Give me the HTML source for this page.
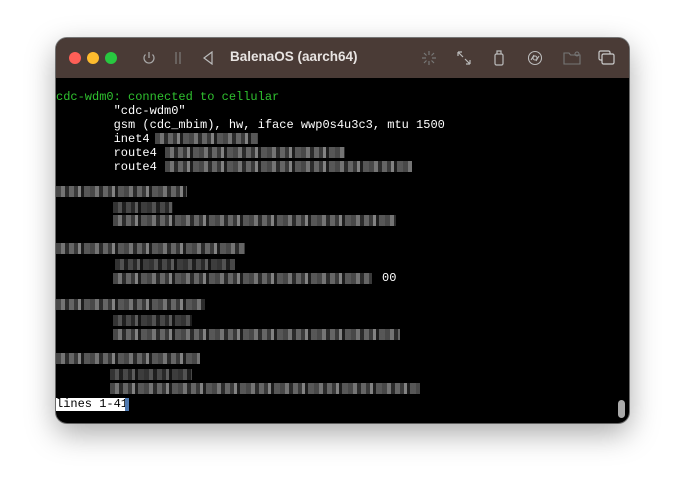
<!DOCTYPE html><html><head><style>
*{margin:0;padding:0;box-sizing:border-box}
body{width:685px;height:497px;background:#fff;position:relative;overflow:hidden;font-family:"Liberation Sans",sans-serif}
.win{position:absolute;left:56px;top:38px;width:573px;height:385px;border-radius:11px;background:#000;overflow:hidden;box-shadow:0 10px 30px rgba(0,0,0,.35),0 0 0 1px rgba(0,0,0,.5)}
.tb{position:absolute;left:0;top:0;width:100%;height:40px;background:#4a3b36}
.dot{position:absolute;top:14px;width:12px;height:12px;border-radius:50%}
.t{position:absolute;font-family:"Liberation Mono",monospace;font-size:12px;line-height:14px;color:#fff;white-space:pre}
.g{color:#2fc12f}
.b{position:absolute;height:11px;background:repeating-linear-gradient(90deg,#555 0 5px,#888 5px 9px,#333 9px 13px,#777 13px 18px,#444 18px 22px,#999 22px 25px,#222 25px 28px,#666 28px 34px);opacity:.85}
.title{position:absolute;left:174px;top:11px;color:#e8e4e2;font-weight:bold;font-size:13.5px}
svg{position:absolute}
</style></head><body>
<div class="win">
<div class="tb">
<div class="dot" style="left:13px;background:#fe5f57"></div>
<div class="dot" style="left:31px;background:#febc2e"></div>
<div class="dot" style="left:49px;background:#28c840"></div>
<svg style="left:85px;top:12px" width="16" height="16" viewBox="0 0 16 16" fill="none" stroke="#aaa" stroke-width="1.2"><path d="M8 2v6M4.5 4.5a5 5 0 1 0 7 0"/></svg>
<svg style="left:118px;top:13px" width="8" height="14" stroke="#888" stroke-width="1"><path d="M2 1v12M6 1v12"/></svg>
<svg style="left:146px;top:13px" width="12" height="14" fill="none" stroke="#bbb" stroke-width="1.2"><path d="M10 1L2 7l8 6z"/></svg>
<div class="title">BalenaOS (aarch64)</div>
<svg style="left:365px;top:12px" width="16" height="16" stroke="#777" stroke-width="1.2"><path d="M8 1v4M8 11v4M1 8h4M11 8h4M3 3l2.5 2.5M10.5 10.5L13 13M13 3l-2.5 2.5M3 13l2.5-2.5"/></svg>
<svg style="left:400px;top:12px" width="16" height="16" fill="none" stroke="#bbb" stroke-width="1.2"><path d="M2 2l5 5M2 2v4M2 2h4M14 14l-5-5M14 14v-4M14 14h-4"/></svg>
<svg style="left:437px;top:11px" width="12" height="18" fill="none" stroke="#bbb" stroke-width="1.2"><rect x="2" y="5" width="8" height="11" rx="1.5"/><path d="M4 5V2h4v3"/></svg>
<svg style="left:471px;top:12px" width="16" height="16" fill="none" stroke="#bbb" stroke-width="1.1"><circle cx="8" cy="8" r="6.5"/><circle cx="8" cy="8" r="2"/><path d="M4 10l3-5M9 11l3-5"/></svg>
<svg style="left:507px;top:12px" width="18" height="16" fill="none" stroke="#777" stroke-width="1.1"><path d="M1 3h5l1.5 2H17v9H1z"/><circle cx="14" cy="4" r="2"/></svg>
<svg style="left:542px;top:12px" width="18" height="16" fill="none" stroke="#ccc" stroke-width="1.2"><rect x="1" y="1" width="11" height="9" rx="1.5"/><rect x="4" y="4" width="12" height="10" rx="1.5" fill="#4a3b36"/></svg>
</div>
</div>
<div class="t g" style="left:56px;top:90px">cdc-wdm0: connected to cellular</div>
<div class="t" style="left:56px;top:104px">        "cdc-wdm0"
        gsm (cdc_mbim), hw, iface wwp0s4u3c3, mtu 1500
        inet4
        route4
        route4</div>
<div class="b" style="left:155px;top:133px;width:103px"></div>
<div class="b" style="left:165px;top:147px;width:180px"></div>
<div class="b" style="left:165px;top:161px;width:247px"></div>
<div class="b" style="left:56px;top:186px;width:131px"></div>
<div class="b" style="left:113px;top:202px;width:60px;opacity:.6"></div>
<div class="b" style="left:113px;top:215px;width:283px"></div>
<div class="b" style="left:56px;top:243px;width:189px"></div>
<div class="b" style="left:115px;top:259px;width:120px;opacity:.6"></div>
<div class="b" style="left:113px;top:273px;width:259px"></div>
<div class="t" style="left:382px;top:271px">00</div>
<div class="b" style="left:56px;top:299px;width:149px"></div>
<div class="b" style="left:113px;top:315px;width:79px;opacity:.6"></div>
<div class="b" style="left:113px;top:329px;width:287px"></div>
<div class="b" style="left:56px;top:353px;width:144px"></div>
<div class="b" style="left:110px;top:369px;width:82px;opacity:.6"></div>
<div class="b" style="left:110px;top:383px;width:310px"></div>
<div class="t" style="left:56px;top:398px;background:#fff;color:#000;width:69px;height:13px;line-height:13px">lines 1-41</div>
<div style="position:absolute;left:125px;top:398px;width:4px;height:13px;background:#4f79b0"></div>
<div style="position:absolute;left:618px;top:400px;width:7px;height:18px;border-radius:4px;background:#aaa"></div>
</body></html>
